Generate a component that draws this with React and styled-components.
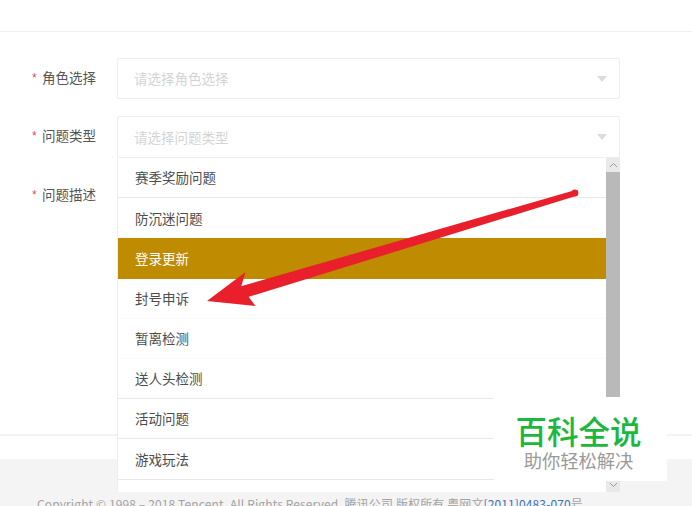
import React from 'react';
import styled, { createGlobalStyle } from 'styled-components';

const Global = createGlobalStyle`
  html, body { margin: 0; padding: 0; background: #fff; }
  body { font-family: "Noto Sans CJK SC", "Liberation Sans", sans-serif; }
`;
const Page = styled.div`
  position: relative; width: 692px; height: 506px; overflow: hidden;
  display: flex; flex-direction: column; background: #fff;
`;
const Header = styled.header`
  flex: none; height: 31px; border-bottom: 1px solid #f2f2f2;
`;
const Form = styled.main`
  flex: none; height: 376px; padding-top: 26px;
  border-bottom: 2px solid #f3f3f3; display: flex; flex-direction: column; gap: 17px;
`;
const Row = styled.div`
  display: flex; align-items: flex-start; padding-left: 32px; width: 588px;
`;
const Label = styled.label`
  flex: none; width: 85px; height: 41px; display: flex; align-items: center; gap: 4px;
  font-size: 13.5px; color: #555; line-height: 1; padding-bottom: 1px; box-sizing: border-box;
`;
const Star = styled.span`
  color: #d9534f; font-size: 12px; font-family: "Liberation Sans", sans-serif; width: 6px;
`;
const Select = styled.div`
  position: relative; box-sizing: border-box; width: 503px; height: ${p => p.$h}px;
  border: 1px solid #eeeeee; border-radius: 2px; display: flex; align-items: center;
  justify-content: space-between; padding: 0 12px 0 17px;
  font-size: 13.5px; color: #d4d4d4; background: #fff; line-height: 1;
`;
const Placeholder = styled.span`
  margin-left: -1px; padding-top: 1px;
`;
const Caret = styled.i`
  width: 0; height: 0; border-left: 5px solid transparent; border-right: 5px solid transparent;
  border-top: 6px solid #dcdcdc;
`;
const Dropdown = styled.div`
  position: absolute; left: -1px; top: 41px; width: 503px; height: 334px; z-index: 2;
  box-sizing: border-box; background: #fff; border-left: 1px solid #eeeeee;
  display: flex; overflow: hidden;
`;
const List = styled.ul`
  flex: 1; margin: 0; padding: 0; list-style: none; min-width: 0;
`;
const Item = styled.li`
  box-sizing: border-box; height: 40.2px; padding: 1px 17px 0 17px; display: flex; align-items: center;
  font-size: 13.5px; color: ${p => (p.$active ? '#fff' : '#4d4d4d')};
  background: ${p => (p.$active ? '#bf8b00' : '#fff')};
  border-bottom: 1px solid ${p => (p.$active ? '#bf8b00' : p.$faint ? '#f9f9f9' : '#e9e9e9')};
`;
const Scrollbar = styled.div`
  flex: none; width: 14px; display: flex; flex-direction: column; background: #f1f1f1;
`;
const ScrollButton = styled.div`
  flex: none; height: 14px; display: flex; align-items: center; justify-content: center;
  background: #e9e9e9;
`;
const Thumb = styled.div`
  flex: 1; background: #b9b9b9;
`;
const Spacer = styled.div`
  flex: none; height: 23px;
`;
const Footer = styled.footer`
  flex: 1; background: #f4f4f4; padding: 38px 0 0 37px;
  font-size: 12px; line-height: 14px; color: #a3a3a3; white-space: pre; letter-spacing: 0.12px;
`;
const FooterLink = styled.a`
  color: #3b73b4;
`;
const Watermark = styled.div`
  position: absolute; left: 494px; top: 397px; width: 173px; height: 84px; z-index: 3;
  background: #fff; display: flex; flex-direction: column; align-items: center; padding: 14px 4px 0 0;
  box-sizing: border-box;
`;
const WatermarkTitle = styled.div`
  font-size: 31.5px; line-height: 38px; font-weight: 500; color: #1cb83e; white-space: nowrap;
`;
const WatermarkSub = styled.div`
  font-size: 18.3px; line-height: 22px; color: #9a9a9a; white-space: nowrap;
`;
const Annotation = styled.svg`
  position: absolute; left: 0; top: 0; z-index: 4; pointer-events: none;
`;

const items = [
  { t: '赛季奖励问题' },
  { t: '防沉迷问题', faint: true },
  { t: '登录更新', active: true },
  { t: '封号申诉', faint: true },
  { t: '暂离检测', faint: true },
  { t: '送人头检测' },
  { t: '活动问题' },
  { t: '游戏玩法' },
];

const Chevron = ({ up }) => (
  <svg width="9" height="6" viewBox="0 0 9 6">
    <path d={up ? 'M1 5 L4.5 1.5 L8 5' : 'M1 1 L4.5 4.5 L8 1'} fill="none" stroke="#9a9a9a" strokeWidth="1" />
  </svg>
);

export default function App() {
  return (
    <Page>
      <Global />
      <Header />
      <Form>
        <Row>
          <Label><Star>*</Star>角色选择</Label>
          <Select $h={41}><Placeholder>请选择角色选择</Placeholder><Caret /></Select>
        </Row>
        <Row>
          <Label><Star>*</Star>问题类型</Label>
          <Select $h={42}>
            <Placeholder>请选择问题类型</Placeholder><Caret />
            <Dropdown>
              <List>
                {items.map(i => (
                  <Item key={i.t} $active={i.active} $faint={i.faint}>{i.t}</Item>
                ))}
              </List>
              <Scrollbar>
                <ScrollButton><Chevron up /></ScrollButton>
                <Thumb />
                <ScrollButton><Chevron /></ScrollButton>
              </Scrollbar>
            </Dropdown>
          </Select>
        </Row>
        <Row>
          <Label><Star>*</Star>问题描述</Label>
        </Row>
      </Form>
      <Spacer />
      <Footer>
        Copyright © 1998 – 2018 Tencent. All Rights Reserved. 腾讯公司 版权所有 粤网文<FooterLink>[2011]0483-070</FooterLink>号
      </Footer>
      <Watermark>
        <WatermarkTitle>百科全说</WatermarkTitle>
        <WatermarkSub>助你轻松解决</WatermarkSub>
      </Watermark>
      <Annotation width="692" height="506" viewBox="0 0 692 506">
        <path d="M575.5 190 L577.5 195.5 L245 298 L240 286.5 Z" fill="#e9202c" />
        <circle cx="575" cy="193" r="3.4" fill="#e9202c" />
        <path d="M207 301 L245.5 272 L241 287 L248 296 L255.5 306 Z" fill="#e9202c" />
      </Annotation>
    </Page>
  );
}
